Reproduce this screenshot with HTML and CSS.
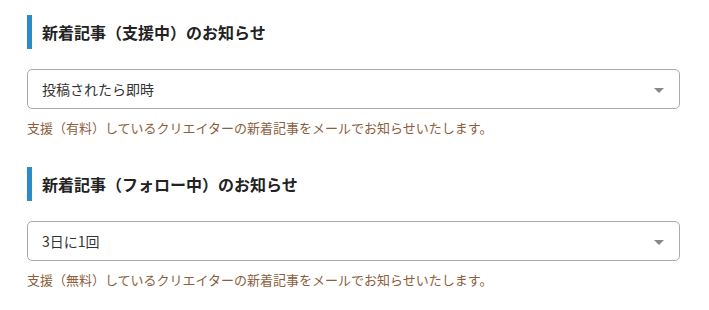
FILE: index.html
```html
<!DOCTYPE html>
<html lang="ja">
<head>
<meta charset="utf-8">
<link rel="stylesheet" href="styles.css">
</head>
<body>
<div class="page">
  <section class="setting">
    <h2 class="setting-title">新着記事（支援中）のお知らせ</h2>
    <div class="select">
      <span class="select-value">投稿されたら即時</span>
      <span class="select-arrow"></span>
    </div>
    <p class="setting-help">支援（有料）しているクリエイターの新着記事をメールでお知らせいたします。</p>
  </section>
  <section class="setting">
    <h2 class="setting-title">新着記事（フォロー中）のお知らせ</h2>
    <div class="select">
      <span class="select-value">3日に1回</span>
      <span class="select-arrow"></span>
    </div>
    <p class="setting-help">支援（無料）しているクリエイターの新着記事をメールでお知らせいたします。</p>
  </section>
</div>
</body>
</html>
```

FILE: styles.css
```css
* { box-sizing: border-box; }
html, body { margin: 0; padding: 0; background: #fff; }
body {
  font-family: "Noto Sans CJK JP", "Noto Sans", sans-serif;
  color: #222;
}
.page {
  padding: 15px 29px 0 27px;
  display: flex;
  flex-direction: column;
  gap: 29px;
}
.setting { display: flex; flex-direction: column; }
.setting-title {
  margin: 0;
  height: 34px;
  line-height: 34px;
  border-left: 5px solid #2a8bc8;
  padding-left: 10px;
  font-size: 16px;
  font-weight: 700;
  color: #222;
}
.select {
  margin-top: 20px;
  height: 40px;
  border: 1px solid #aaa;
  border-radius: 5px;
  display: flex;
  align-items: center;
  justify-content: space-between;
  padding: 0 15px 0 14px;
}
.select-value {
  font-size: 14px;
  color: #333;
}
.select-arrow {
  width: 0;
  height: 0;
  border-left: 5px solid transparent;
  border-right: 5px solid transparent;
  border-top: 5px solid #888;
  margin-top: 2px;
}
.setting-help {
  margin: 9px 0 0;
  font-size: 13px;
  line-height: 20px;
  color: #8b5e3c;
}
```
